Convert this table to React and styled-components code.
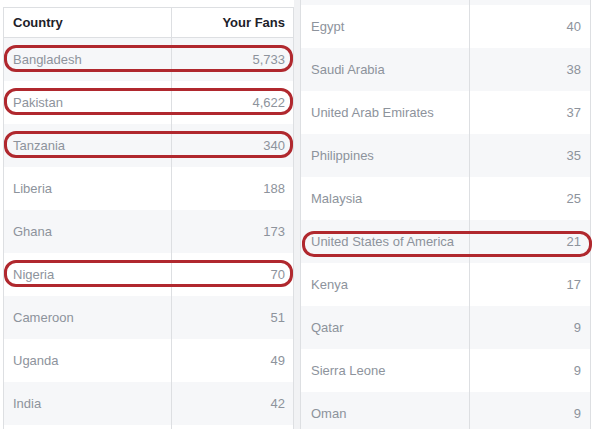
import React from 'react';
import styled, { createGlobalStyle } from 'styled-components';

const leftRows = [
  { country: 'Bangladesh', fans: '5,733', marked: true },
  { country: 'Pakistan', fans: '4,622', marked: true },
  { country: 'Tanzania', fans: '340', marked: true },
  { country: 'Liberia', fans: '188' },
  { country: 'Ghana', fans: '173' },
  { country: 'Nigeria', fans: '70', marked: true },
  { country: 'Cameroon', fans: '51' },
  { country: 'Uganda', fans: '49' },
  { country: 'India', fans: '42' },
];

const rightRows = [
  { country: 'Egypt', fans: '40' },
  { country: 'Saudi Arabia', fans: '38' },
  { country: 'United Arab Emirates', fans: '37' },
  { country: 'Philippines', fans: '35' },
  { country: 'Malaysia', fans: '25' },
  { country: 'United States of America', fans: '21', marked: true },
  { country: 'Kenya', fans: '17' },
  { country: 'Qatar', fans: '9' },
  { country: 'Sierra Leone', fans: '9' },
  { country: 'Oman', fans: '9' },
];

const GlobalStyle = createGlobalStyle`
  html, body {
    margin: 0;
    padding: 0;
    background: #ffffff;
    font-family: "Liberation Sans", Arial, Helvetica, sans-serif;
    overflow: hidden;
  }
`;

const App = () => {
  return (
    <>
      <GlobalStyle />
      <Page>
        <Panel $top={7} $first={168} $padLeft={9} $padRight={8}>
          <HeaderRow>
            <HeadCell>Country</HeadCell>
            <HeadCell $right>Your Fans</HeadCell>
          </HeaderRow>
          {leftRows.map((row, index) => (
            <Row key={row.country} $shaded={index % 2 === 0}>
              <Cell>{row.country}</Cell>
              <Cell $right>{row.fans}</Cell>
              {row.marked && <Mark $top={7} $height={27} />}
            </Row>
          ))}
          <Row $short />
        </Panel>
        <Gutter />
        <Panel $top={0} $first={169} $padLeft={10} $padRight={9}>
          <Row $shaded $cut />
          {rightRows.map((row, index) => (
            <Row key={row.country} $shaded={index % 2 === 1}>
              <Cell>{row.country}</Cell>
              <Cell $right>{row.fans}</Cell>
              {row.marked && <Mark $top={11} $height={26} $wide />}
            </Row>
          ))}
        </Panel>
      </Page>
    </>
  );
};

const Page = styled.div`
  display: flex;
  align-items: flex-start;
  width: 600px;
  height: 429px;
  padding-left: 3px;
  box-sizing: border-box;
  overflow: hidden;
`;

const Panel = styled.div`
  --first: ${(p) => p.$first}px;
  --pad-left: ${(p) => p.$padLeft}px;
  --pad-right: ${(p) => p.$padRight}px;
  width: 291px;
  box-sizing: border-box;
  margin-top: ${(p) => p.$top}px;
  border: 1px solid #dddfe2;
  border-top-width: ${(p) => (p.$top ? 1 : 0)}px;
  background: #ffffff;
  display: flex;
  flex-direction: column;
`;

const Gutter = styled.div`
  width: 6px;
  height: 429px;
  background: #f1f2f4;
`;

const HeaderRow = styled.div`
  display: grid;
  grid-template-columns: var(--first) 1fr;
  height: 29px;
  border-bottom: 1px solid #dddfe2;
`;

const HeadCell = styled.div`
  display: flex;
  align-items: center;
  justify-content: ${(p) => (p.$right ? 'flex-end' : 'flex-start')};
  padding: 0 var(--pad-right) 0 var(--pad-left);
  padding-left: ${(p) => (p.$right ? '0' : 'var(--pad-left)')};
  border-right: ${(p) => (p.$right ? 'none' : '1px solid #dddfe2')};
  font-size: 13px;
  font-weight: bold;
  color: #1d2129;
`;

const Row = styled.div`
  position: relative;
  display: grid;
  grid-template-columns: var(--first) 1fr;
  height: ${(p) => (p.$cut ? 5 : p.$short ? 10 : 43)}px;
  flex-shrink: 0;
  background: ${(p) => (p.$shaded ? '#f6f7f9' : '#ffffff')};

  &::before {
    content: '';
    grid-column: 1;
    grid-row: 1;
    border-right: 1px solid #dddfe2;
    display: ${(p) => (p.$cut || p.$short ? 'block' : 'none')};
  }
`;

const Cell = styled.div`
  display: flex;
  align-items: center;
  justify-content: ${(p) => (p.$right ? 'flex-end' : 'flex-start')};
  padding-left: ${(p) => (p.$right ? '0' : 'var(--pad-left)')};
  padding-right: ${(p) => (p.$right ? 'var(--pad-right)' : '0')};
  border-right: ${(p) => (p.$right ? 'none' : '1px solid #dddfe2')};
  font-size: 13px;
  color: #8d939c;
  white-space: nowrap;
`;

const Mark = styled.div`
  position: absolute;
  top: ${(p) => p.$top}px;
  left: ${(p) => (p.$wide ? 1 : 0)}px;
  right: ${(p) => (p.$wide ? -2 : 0)}px;
  height: ${(p) => p.$height}px;
  box-sizing: border-box;
  border: 3px solid #b0282e;
  border-radius: 12px;
  pointer-events: none;
`;

export default App;
